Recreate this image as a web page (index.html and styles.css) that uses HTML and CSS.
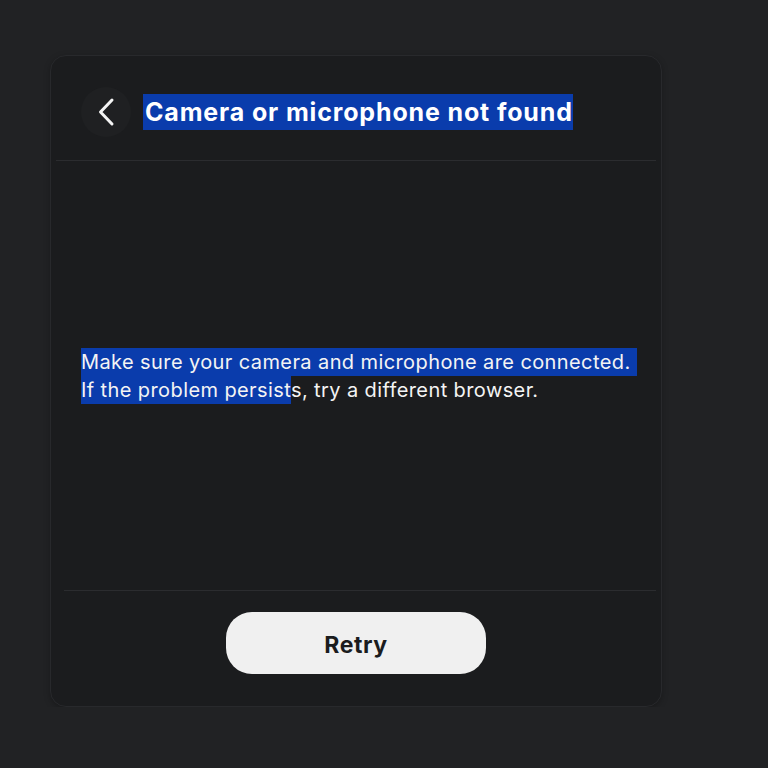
FILE: index.html
```html
<!DOCTYPE html>
<html lang="en">
<head>
    <meta charset="UTF-8">
    <meta name="viewport" content="width=device-width, initial-scale=1.0">
    <title>Camera or microphone not found</title>
    <link rel="stylesheet" href="styles.css">
</head>
<body>

<div class="dialog">
    <div class="dialog-header">
        <button class="back-btn" aria-label="Back">
            <svg width="20" height="30" viewBox="0 0 20 30" fill="none">
                <path d="M16 3 L4.5 15 L16 27" stroke="#f4f4f4" stroke-width="3" stroke-linecap="round" stroke-linejoin="round"/>
            </svg>
        </button>
        <h1 class="title"><span class="sel">Camera or microphone not found</span></h1>
    </div>
    <div class="divider"></div>

    <div class="dialog-body">
        <p class="message"><span class="sel">Make sure your camera and microphone are connected.&nbsp;</span><br><span class="sel">If the problem persist</span>s, try a different browser.</p>
    </div>

    <div class="divider divider-bottom"></div>
    <div class="dialog-footer">
        <button class="retry-btn">Retry</button>
    </div>
</div>

</body>
</html>
```

FILE: styles.css
```css
body {
    margin: 0;
    background-color: #212224;
    font-family: Inter, "Open Sans", sans-serif;
    color: #f2f2f2;
}
.dialog {
    width: 610px;
    height: 650px;
    margin: 55px 0 0 50px;
    background-color: #1b1c1e;
    border: 1px solid #28292c;
    border-radius: 16px;
    display: flex;
    flex-direction: column;
    box-shadow: 0 2px 6px rgba(0, 0, 0, 0.25);
}
.dialog-header {
    display: flex;
    align-items: center;
    gap: 12px;
    padding: 31px 30px 23px;
}
.back-btn {
    width: 50px;
    height: 50px;
    border-radius: 50%;
    border: none;
    background-color: #1f2022;
    display: flex;
    align-items: center;
    justify-content: center;
    padding: 0;
    cursor: pointer;
}
.title {
    margin: 0;
    font-size: 25px;
    font-weight: 700;
    line-height: 35px;
    letter-spacing: 0.85px;
    color: #ffffff;
}
.title .sel {
    padding: 3px 0 3px 2px;
}
.sel {
    background-color: #0a3cac;
}
.divider {
    height: 1px;
    background-color: #2b2c2f;
    margin: 0 5px;
}
.divider-bottom {
    margin-left: 13px;
}
.dialog-body {
    flex: 1;
    display: flex;
    align-items: center;
    padding: 0 20px 0 30px;
}
.message {
    margin: 0;
    font-size: 20px;
    line-height: 28px;
    letter-spacing: 0.4px;
    white-space: nowrap;
    color: #f4f4f4;
}
.message .sel {
    padding: 2px 0;
}
.dialog-footer {
    display: flex;
    justify-content: center;
    padding: 21px 0 32px;
}
.retry-btn {
    width: 260px;
    height: 62px;
    border: none;
    border-radius: 26px;
    background-color: #f0f0f0;
    color: #1b1c1e;
    font-family: Inter, "Open Sans", sans-serif;
    font-size: 23px;
    font-weight: 700;
    letter-spacing: 0.6px;
    padding: 3px 0 0;
    cursor: pointer;
}
```
